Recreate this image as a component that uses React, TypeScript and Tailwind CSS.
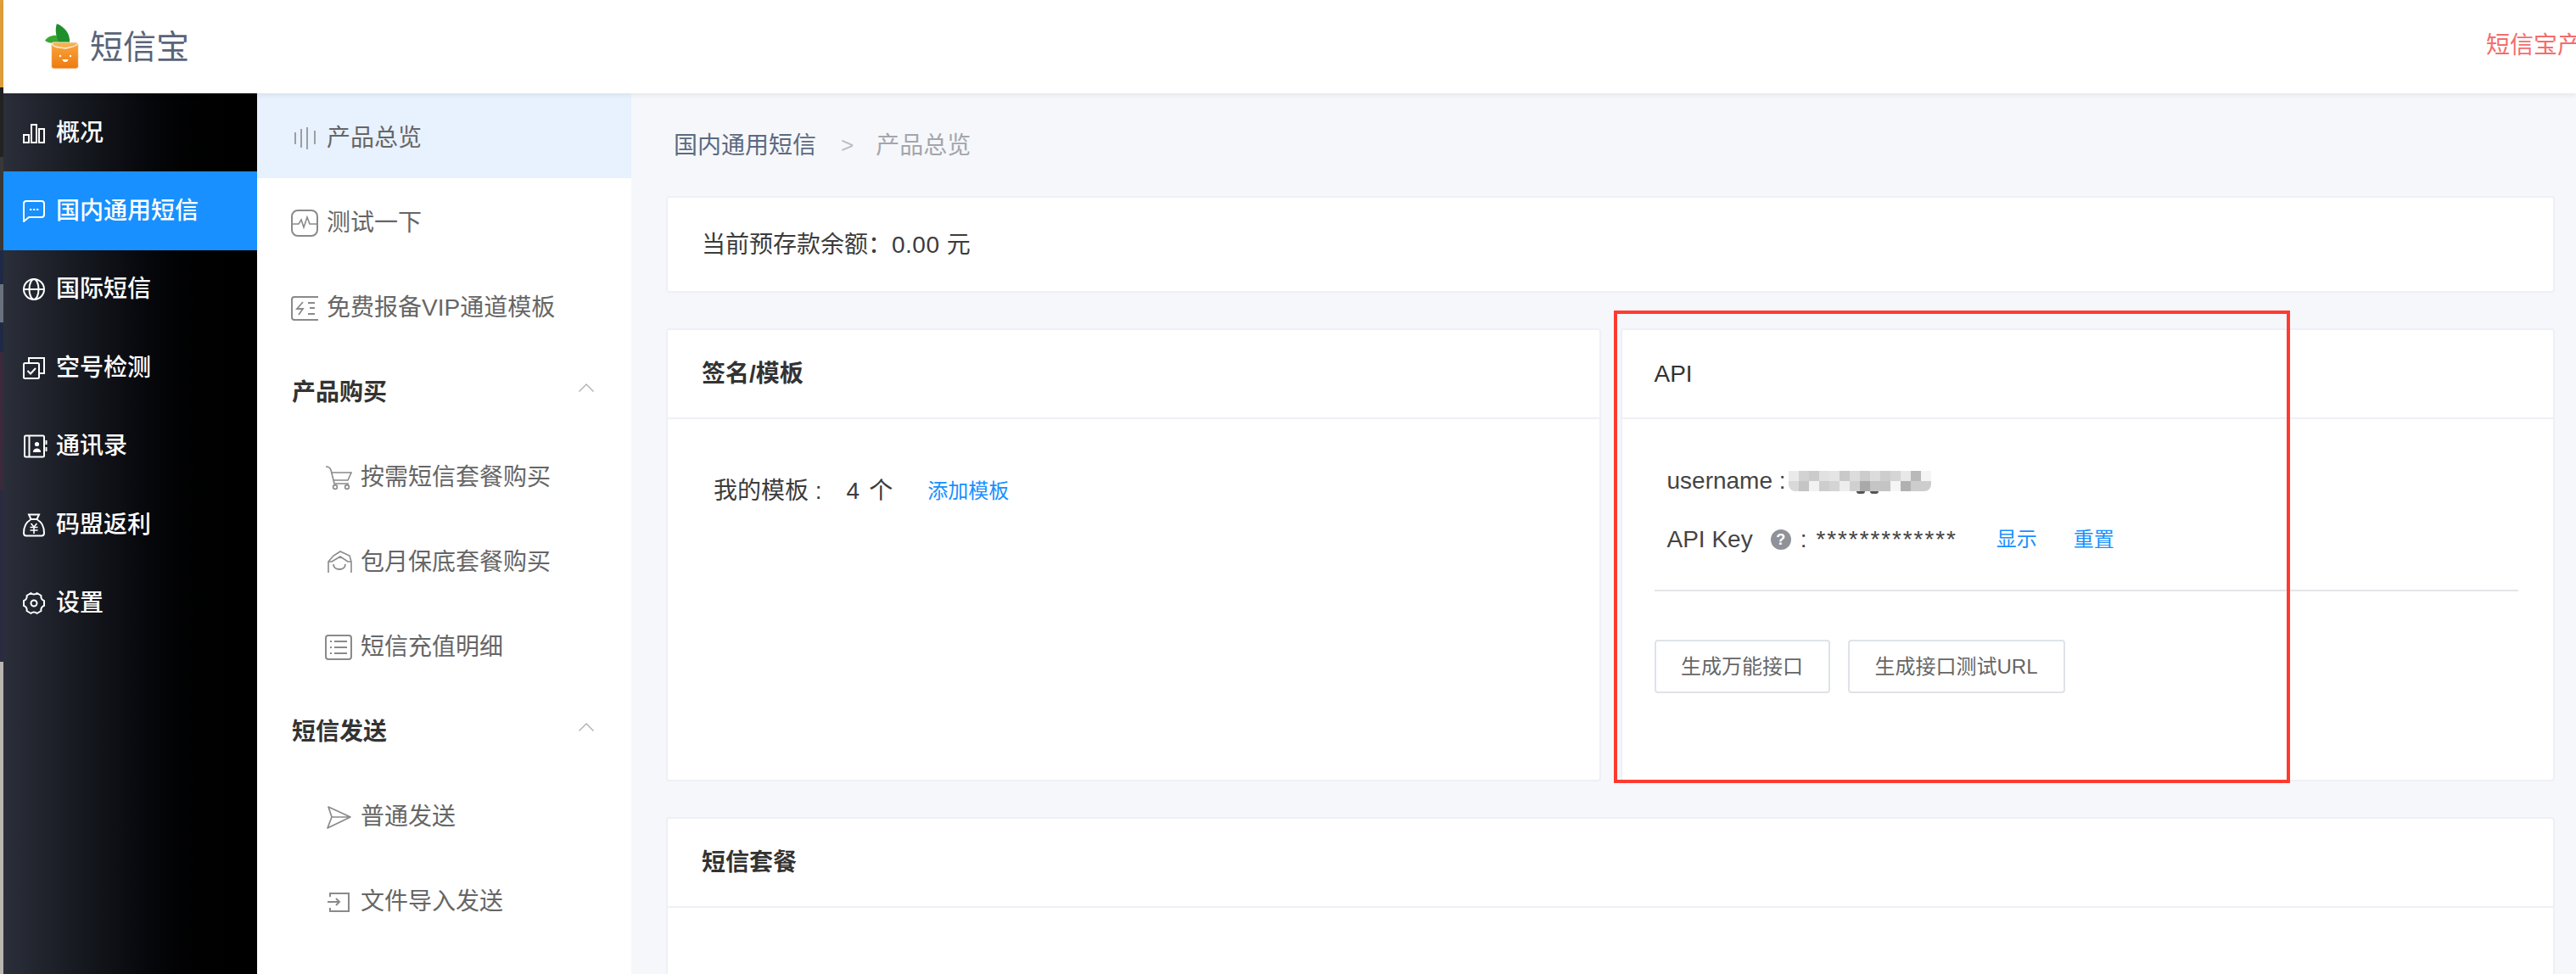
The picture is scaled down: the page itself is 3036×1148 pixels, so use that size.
import React from 'react';

const Svg: React.FC<{ className: string; box: string; children: React.ReactNode }> = ({ className, box, children }) => (
  <svg className={className} viewBox={box} fill="none" stroke="currentColor" strokeWidth={2}>
    {children}
  </svg>
);

const Logo = () => (
  <svg className="w-[40px] h-[54px] shrink-0" viewBox="0 0 40 54">
    <defs>
      <linearGradient id="box" x1="0" y1="0" x2="0" y2="1">
        <stop offset="0" stopColor="#f9a63d" />
        <stop offset="1" stopColor="#ee7a10" />
      </linearGradient>
    </defs>
    <path d="M0 20 C3 15 9 13 14 14 L18 22 C11 24 4 23 0 20Z" fill="#3aa82f" />
    <path d="M17 22 C12 15 12 5 14 0 C22 3 30 11 29 22 C25 23 20 23 17 22Z" fill="#1f8f2b" />
    <rect x="7.5" y="22" width="32" height="31" rx="3" fill="url(#box)" stroke="#f6ead9" strokeWidth="1.2" />
    <path d="M8 23 C11 29 16 27 24 29 C30 27 36 28 39 23" fill="#f8b04f" stroke="#fbeedd" strokeWidth="1.4" />
    <circle cx="18" cy="38" r="1.2" fill="#fff" />
    <circle cx="30" cy="38" r="1.2" fill="#fff" />
    <path d="M20.5 42 H27.5 C27 46 21 46 20.5 42Z" fill="#fff" />
  </svg>
);

const darkIcon = 'w-[26px] h-[28px] shrink-0';

const darkItems = [
  {
    label: '概况',
    icon: (
      <Svg className={darkIcon} box="0 0 26 28">
        <rect x="1" y="16" width="6" height="9" />
        <rect x="10" y="4" width="6" height="21" />
        <rect x="19" y="9" width="6" height="16" />
      </Svg>
    ),
  },
  {
    label: '国内通用短信',
    active: true,
    icon: (
      <Svg className={darkIcon} box="0 0 26 28">
        <path d="M1 26 V5 a3 3 0 0 1 3-3 H22 a3 3 0 0 1 3 3 V18 a3 3 0 0 1-3 3 H7 Z" strokeLinejoin="round" />
        <path d="M8 12h2.4M12 12h2.4M16 12h2.4" />
      </Svg>
    ),
  },
  {
    label: '国际短信',
    icon: (
      <Svg className={darkIcon} box="0 0 26 28">
        <circle cx="13" cy="14" r="12" />
        <ellipse cx="13" cy="14" rx="5.5" ry="12" />
        <path d="M1 14h24" />
      </Svg>
    ),
  },
  {
    label: '空号检测',
    icon: (
      <Svg className={darkIcon} box="0 0 26 28">
        <rect x="1" y="8" width="18" height="18" rx="1.5" />
        <path d="M7 7 V2 H25 V20 H20" />
        <path d="M5.5 17 L9 20.5 L15 14" />
      </Svg>
    ),
  },
  {
    label: '通讯录',
    icon: (
      <Svg className="w-[29px] h-[28px] shrink-0 -mr-[3px]" box="0 0 29 28">
        <rect x="2" y="1.5" width="23" height="25" rx="1.5" />
        <path d="M7.5 1.5 V26.5 M12 20 H21 M27.5 7 V12 M27.5 15 V20" />
        <circle cx="16.5" cy="11.5" r="2.6" fill="currentColor" stroke="none" />
        <path d="M12.5 19 C13 15.5 20 15.5 20.5 19" fill="currentColor" stroke="none" />
      </Svg>
    ),
  },
  {
    label: '码盟返利',
    icon: (
      <Svg className={darkIcon} box="0 0 26 28">
        <path d="M7 1.5 H19 L16.5 7 H9.5 Z" />
        <path d="M9 7.5 C3 11 1 17 1 23 C1 25.5 2.5 26.5 4 26.5 H22 C23.5 26.5 25 25.5 25 23 C25 17 23 11 17 7.5" />
        <path d="M9.5 12 L13 16 L16.5 12 M8.5 16.5 H17.5 M8.5 20 H17.5 M13 16 V24" strokeWidth={1.6} />
      </Svg>
    ),
  },
  {
    label: '设置',
    icon: (
      <Svg className={darkIcon} box="0 0 26 28">
        <path
          d="M9.5 2 C11 4 15 4 16.5 2 L21.5 5 C20.7 7.5 22.5 10.5 25 11 V17 C22.5 17.5 20.7 20.5 21.5 23 L16.5 26 C15 24 11 24 9.5 26 L4.5 23 C5.3 20.5 3.5 17.5 1 17 V11 C3.5 10.5 5.3 7.5 4.5 5 Z"
          strokeLinejoin="round"
        />
        <circle cx="13" cy="14" r="3.5" />
      </Svg>
    ),
  },
];

const subIcon = 'w-[32px] h-[32px] shrink-0 text-[#8a8a8a]';

const Chevron = () => (
  <svg className="w-[18px] h-[10px] shrink-0 text-[#b0b0b0]" viewBox="0 0 18 10" fill="none" stroke="currentColor" strokeWidth={1.4}>
    <path d="M0.5 9.5 L9 1 L17.5 9.5" />
  </svg>
);

const SubRow: React.FC<{ icon: React.ReactNode; label: string; active?: boolean; child?: boolean }> = ({ icon, label, active, child }) => (
  <div className={`h-[100px] pt-[6px] flex items-center text-[28px] text-[#666] ${child ? 'pl-[80px] gap-[10px]' : 'pl-[40px] gap-[10px]'} ${active ? 'bg-[#e8f1fe]' : ''}`}>
    {icon}
    <span>{label}</span>
  </div>
);

const SubHead: React.FC<{ label: string }> = ({ label }) => (
  <div className="h-[100px] pt-[6px] flex items-center justify-between pl-[41px] pr-[44px] text-[28px] font-semibold text-[#333]">
    <span>{label}</span>
    <span className="-mt-[12px] flex">
      <Chevron />
    </span>
  </div>
);

const CardHead: React.FC<{ children: React.ReactNode; medium?: boolean }> = ({ children, medium }) => (
  <div className={`h-[105px] flex items-center px-[40px] border-b-2 border-[#eef0f5] text-[28px] text-[#333] ${medium ? 'font-semibold' : ''}`}>
    {children}
  </div>
);

const mosaic = [
  'bg-[#eaeaea]', 'bg-[#d2d2d2]', 'bg-[#cbcbcb]', 'bg-[#e1e1e1]', 'bg-[#e5e5e5]', 'bg-[#c9c9c9]', 'bg-[#dcdcdc]',
  'bg-[#cccccc]', 'bg-[#dcdcdc]', 'bg-[#cdcdcd]', 'bg-[#d5d5d5]', 'bg-[#e8e8e8]', 'bg-[#b9b9b9]', 'bg-[#f4f4f4]',
  'bg-[#d9d9d9]', 'bg-[#c5c5c5]', 'bg-[#f2f2f2]', 'bg-[#cdcdcd]', 'bg-[#d4d4d4]', 'bg-[#ededed]', 'bg-[#d0d0d0]',
  'bg-[#a9a9a9]', 'bg-[#c5c5c5]', 'bg-[#c4c4c4]', 'bg-[#f5f5f5]', 'bg-[#b1b1b1]', 'bg-[#cdcdcd]', 'bg-[#cdcdcd]',
];

const Btn: React.FC<{ label: string; className: string }> = ({ label, className }) => (
  <button className={`h-[63px] flex items-center justify-center border-2 border-[#dfe3e8] rounded-[4px] bg-white text-[24px] text-[#666] ${className}`}>
    {label}
  </button>
);

export default function App() {
  return (
    <div className="relative flex w-[3036px] h-[1148px] overflow-hidden bg-white font-['Liberation_Sans','Noto_Sans_CJK_SC',sans-serif]">
      {/* desktop showing behind the browser window */}
      <div className="w-[4px] shrink-0 flex flex-col">
        <div className="h-[103px] bg-[#e0a03c]" />
        <div className="h-[82px] bg-[#222222]" />
        <div className="h-[110px] bg-[#383838]" />
        <div className="h-[40px] bg-[#1e2a45]" />
        <div className="h-[45px] bg-[#6a7280]" />
        <div className="h-[35px] bg-[#1e2a45]" />
        <div className="h-[163px] bg-[#3a2a3c]" />
        <div className="h-[202px] bg-[#2a2a40]" />
        <div className="flex-1 bg-[#bab6b0]" />
      </div>

      <div className="flex-1 flex flex-col min-w-0">
        <header className="relative z-10 h-[110px] shrink-0 flex items-center justify-between bg-white pl-[49px] shadow-[0_2px_6px_rgba(0,0,0,0.08)]">
          <div className="flex items-center gap-[13px]">
            <Logo />
            <span className="text-[39px] text-[#5a6478] leading-none">短信宝</span>
          </div>
          <div className="w-[106px] pb-[3px] overflow-hidden whitespace-nowrap text-[28px] text-[#f56c6c]">短信宝产品</div>
        </header>

        <div className="flex-1 flex min-h-0">
          <aside className="w-[299px] shrink-0 bg-linear-to-r from-[#2b2f3a] to-black text-white">
            {darkItems.map((item) => (
              <div
                key={item.label}
                className={`h-[92.4px] pt-[1px] flex items-center gap-[13px] pl-[23px] text-[28px] font-medium ${item.active ? 'bg-[#1890ff]' : ''}`}
              >
                {item.icon}
                <span>{item.label}</span>
              </div>
            ))}
          </aside>

          <nav className="w-[441px] shrink-0 bg-white overflow-hidden">
            <SubRow
              active
              label="产品总览"
              icon={
                <Svg className={subIcon} box="0 0 32 32">
                  <path d="M5 9v14M12 5v22M19 3v26M28 7v16" strokeWidth={1.6} />
                </Svg>
              }
            />
            <SubRow
              label="测试一下"
              icon={
                <Svg className={subIcon} box="0 0 32 32">
                  <rect x="1" y="1" width="30" height="30" rx="7" />
                  <path d="M1 17 H9 L12 12 L15 21 L19 9 L22 17 H31" strokeWidth={1.6} />
                </Svg>
              }
            />
            <SubRow
              label="免费报备VIP通道模板"
              icon={
                <Svg className={subIcon} box="0 0 32 32">
                  <path d="M32 3 H4 a3 3 0 0 0-3 3 V27 a3 3 0 0 0 3 3 H32" />
                  <path d="M14 9 L7 17 H14 L9 24" strokeWidth={1.8} />
                  <path d="M20 10h8M22 16h6M20 23h8" />
                </Svg>
              }
            />
            <SubHead label="产品购买" />
            <SubRow
              child
              label="按需短信套餐购买"
              icon={
                <Svg className={subIcon} box="0 0 32 32">
                  <path d="M1 3 C4 3 6 4 7 7 L11 23 H28" strokeWidth={1.6} />
                  <path d="M8 10 H31 L27 19 H10" strokeWidth={1.6} />
                  <circle cx="12" cy="27" r="2.4" strokeWidth={1.6} />
                  <circle cx="26" cy="27" r="2.4" strokeWidth={1.6} />
                </Svg>
              }
            />
            <SubRow
              child
              label="包月保底套餐购买"
              icon={
                <Svg className={subIcon} box="0 0 32 32">
                  <path d="M4 28 V15 L10 8 L18 3 L29 8 L31 15 V28" strokeWidth={1.6} />
                  <path d="M4 15 H8 L18 9 L27 15 H31" strokeWidth={1.6} />
                  <path d="M10 18 C10 26 24 26 24 18" strokeWidth={1.8} />
                </Svg>
              }
            />
            <SubRow
              child
              label="短信充值明细"
              icon={
                <Svg className={subIcon} box="0 0 32 32">
                  <rect x="1" y="2" width="30" height="28" rx="3" />
                  <path d="M6 9h2M6 16h2M6 23h2M11 9h15M11 16h15M11 23h15" />
                </Svg>
              }
            />
            <SubHead label="短信发送" />
            <SubRow
              child
              label="普通发送"
              icon={
                <Svg className={subIcon} box="0 0 32 32">
                  <path d="M4 4 L30 16 L3 29 L8 16 Z M8 16 H30" strokeWidth={1.7} strokeLinejoin="round" />
                </Svg>
              }
            />
            <SubRow
              child
              label="文件导入发送"
              icon={
                <Svg className={subIcon} box="0 0 32 32">
                  <path d="M6 10 V6 H28 V27 H6 V23" />
                  <path d="M3 16 H17 M13 12 L17 16 L13 20" />
                </Svg>
              }
            />
          </nav>

          <main className="flex-1 min-w-0 bg-[#f6f7fb] pl-[41px] pr-[25px] overflow-hidden">
            <div className="h-[121px] pt-[2px] flex items-center pl-[9px] text-[28px]">
              <span className="text-[#5c6a80]">国内通用短信</span>
              <span className="ml-[29px] mr-[26px] text-[#b9bdc4] text-[26px]">&gt;</span>
              <span className="text-[#a2a6ac]">产品总览</span>
            </div>

            <div className="h-[114px] pt-[2px] flex items-center px-[40px] bg-white border-2 border-[#eef0f5] rounded-[4px] text-[28px] text-[#3c3c3c]">
              <span>当前预存款余额：</span>
              <span className="tracking-[0.5px] whitespace-pre">0.00 元</span>
            </div>

            <div className="flex gap-[23px] mt-[42px] h-[534px]">
              <section className="flex-1 bg-white border-2 border-[#eef0f5] rounded-[4px]">
                <CardHead medium>签名/模板</CardHead>
                <div className="pt-[65px] pl-[54px] flex items-center text-[28px] text-[#3c3c3c] leading-[40px]">
                  <span>我的模板 :</span>
                  <span className="ml-[29px]">4</span>
                  <span className="ml-[11px]">个</span>
                  <span className="ml-[41px] text-[24px] text-[#1890ff]">添加模板</span>
                </div>
              </section>

              <section className="flex-1 bg-white border-2 border-[#eef0f5] rounded-[4px]">
                <CardHead>
                  <span className="-ml-[2px]">API</span>
                </CardHead>
                <div className="pl-[38px] pr-[41px] pt-[53px]">
                  <div className="pl-[15px] h-[40px] flex items-center text-[28px] text-[#444]">
                    <span>username :</span>
                    <div className="relative ml-[3px]">
                      <div className="grid grid-cols-[repeat(14,12px)] grid-rows-[repeat(2,12px)] rounded-b-[8px] overflow-hidden">
                        {mosaic.map((cls, i) => (
                          <div key={i} className={cls} />
                        ))}
                      </div>
                      {/* descenders of the name showing under the mosaic */}
                      <span className="absolute left-[80px] top-[24px] w-[10px] h-[3px] rounded-b-full bg-[#555]" />
                      <span className="absolute left-[96px] top-[24px] w-[10px] h-[3px] rounded-b-full bg-[#555]" />
                    </div>
                  </div>
                  <div className="pl-[15px] mt-[29px] h-[40px] flex items-center text-[28px] text-[#444]">
                    <span>API Key</span>
                    <span className="ml-[21px] w-[24px] h-[24px] rounded-full bg-[#8f9399] text-white text-[18px] font-bold flex items-center justify-center leading-none">?</span>
                    <span className="ml-[11px]">:</span>
                    <span className="ml-[11px] tracking-[1.9px] leading-none">*************</span>
                    <span className="ml-[46px] text-[24px] text-[#1890ff]">显示</span>
                    <span className="ml-[43px] text-[24px] text-[#1890ff]">重置</span>
                  </div>
                  <div className="mt-[39px] border-t-2 border-[#e3e5e8]" />
                  <div className="mt-[57px] flex gap-[21px]">
                    <Btn label="生成万能接口" className="w-[207px]" />
                    <Btn label="生成接口测试URL" className="w-[256px]" />
                  </div>
                </div>
              </section>
            </div>

            <section className="mt-[42px] h-[400px] bg-white border-2 border-[#eef0f5] rounded-[4px]">
              <CardHead medium>短信套餐</CardHead>
            </section>
          </main>
        </div>
      </div>

      {/* red annotation drawn over the screenshot */}
      <div className="absolute left-[1902px] top-[366px] w-[797px] h-[557px] border-4 border-[#ff3b30] pointer-events-none" />
    </div>
  );
}
